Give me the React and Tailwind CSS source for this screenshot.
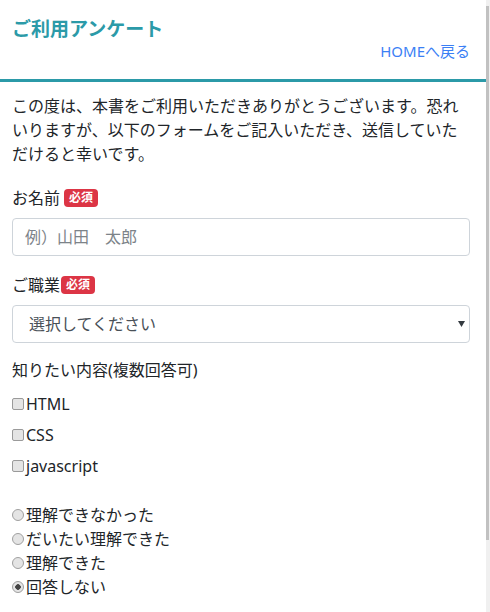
import React, { useState } from 'react';

const font = { fontFamily: '"Noto Sans", "Noto Sans CJK JP", sans-serif' };

function Badge({ className = '' }) {
  return (
    <span className={`inline-flex items-center justify-center w-[34px] h-[18px] rounded-[4px] bg-[#dc3545] text-white text-[12px] font-bold leading-none ${className}`}>
      必須
    </span>
  );
}

const topics = ['HTML', 'CSS', 'javascript'];
const levels = ['理解できなかった', 'だいたい理解できた', '理解できた', '回答しない'];

function App() {
  const [checked, setChecked] = useState([]);
  const [level, setLevel] = useState('回答しない');

  const toggle = (t) =>
    setChecked(prev => (prev.includes(t) ? prev.filter(x => x !== t) : [...prev, t]));

  return (
    <div className="flex h-[612px] overflow-hidden bg-white text-[#212529]" style={font}>
      <div className="flex-1 min-w-0">
        {/* Header */}
        <header className="border-b-[3px] border-[#2b9aa8] pl-3 pr-4 pt-[17px] pb-[18px]">
          <h1 className="text-[19px] font-bold leading-[24px] text-[#2b9aa8]">ご利用アンケート</h1>
          <div className="flex justify-end">
            <a href="#" className="text-[15px] leading-[20px] text-[#3b7ff5]">HOMEへ戻る</a>
          </div>
        </header>

        <form className="pl-3 pr-4 pt-3" onSubmit={e => e.preventDefault()}>
          <p className="text-[16px] leading-[24px]">
            この度は、本書をご利用いただきありがとうございます。恐れいりますが、以下のフォームをご記入いただき、送信していただけると幸いです。
          </p>

          {/* Name */}
          <label className="mt-5 flex items-center text-[16px] leading-[24px]">
            お名前<Badge className="ml-[4px]" />
          </label>
          <input
            type="text"
            placeholder="例）山田　太郎"
            className="mt-2 block w-full h-[38px] rounded-[4px] border border-[#ced4da] px-3 text-[16px] placeholder:text-[#7d8389] outline-none"
          />

          {/* Job */}
          <label className="mt-[17px] flex items-center text-[16px] leading-[24px]">
            ご職業<Badge className="ml-[1px]" />
          </label>
          <div className="relative mt-2">
            <select className="block w-full h-[38px] appearance-none rounded-[4px] border border-[#ced4da] bg-white pl-4 text-[16px] text-[#495057] outline-none">
              <option>選択してください</option>
              <option>学生</option>
              <option>会社員</option>
              <option>その他</option>
            </select>
            <svg className="pointer-events-none absolute right-[5px] top-[16px]" width="7" height="6" viewBox="0 0 7 6">
              <path d="M0 0h7L3.5 6z" fill="#343a40" />
            </svg>
          </div>

          {/* Topics */}
          <p className="mt-[15px] text-[16px] leading-[24px]">知りたい内容(複数回答可)</p>
          <div className="mt-[10px] flex flex-col gap-[7px]">
            {topics.map(t => (
              <label key={t} className="flex items-center text-[16px] leading-[24px]">
                <input
                  type="checkbox"
                  checked={checked.includes(t)}
                  onChange={() => toggle(t)}
                  className="appearance-none w-[12px] h-[12px] mr-[2px] rounded-[2px] border border-[#9a9a9a] bg-[#e4e4e4] checked:bg-[#555]"
                />
                {t}
              </label>
            ))}
          </div>

          {/* Level */}
          <div className="mt-[25px] flex flex-col">
            {levels.map(l => (
              <label key={l} className="flex items-center text-[16px] leading-[24px]">
                <input
                  type="radio"
                  name="level"
                  checked={level === l}
                  onChange={() => setLevel(l)}
                  className="appearance-none w-[12px] h-[12px] mr-[2px] rounded-full border border-[#a0a0a0] bg-[#e4e4e4] checked:bg-[radial-gradient(circle,#444_0_2.5px,#e4e4e4_3px)]"
                />
                {l}
              </label>
            ))}
          </div>
        </form>
      </div>

      {/* Scrollbar */}
      <div className="w-[4px] shrink-0 bg-[#f0f0f0] pt-[6px]">
        <div className="w-[3px] h-[534px] bg-[#c1c1c1]" />
      </div>
    </div>
  );
}

export default App;
